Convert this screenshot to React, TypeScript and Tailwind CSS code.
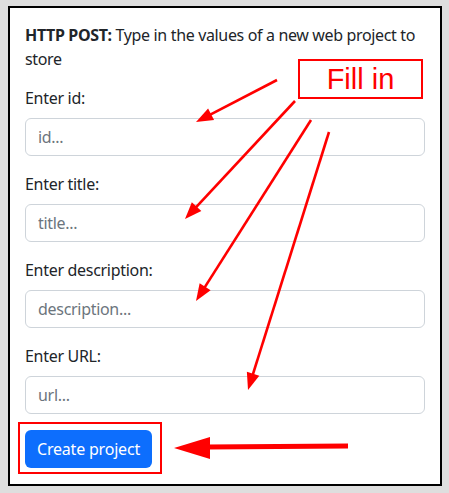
const fields = [
  { label: 'Enter id:', placeholder: 'id...' },
  { label: 'Enter title:', placeholder: 'title...' },
  { label: 'Enter description:', placeholder: 'description...' },
  { label: 'Enter URL:', placeholder: 'url...' },
];

// start/end points of the thin annotation arrows
const arrows = [
  [277, 80, 196, 122],
  [295, 101, 185, 219],
  [311, 120, 196, 301],
  [329, 132, 248, 390],
];

function Arrow({ x1, y1, x2, y2 }: { x1: number; y1: number; x2: number; y2: number }) {
  const dx = x2 - x1;
  const dy = y2 - y1;
  const len = Math.hypot(dx, dy);
  const ux = dx / len;
  const uy = dy / len;
  const head = 17;
  const half = 6.5;
  const bx = x2 - ux * head;
  const by = y2 - uy * head;
  const pts = `${x2},${y2} ${bx - uy * half},${by + ux * half} ${bx + uy * half},${by - ux * half}`;
  return (
    <g>
      <line x1={x1} y1={y1} x2={bx + ux * 2} y2={by + uy * 2} stroke="#ff0000" strokeWidth="2.6" />
      <polygon points={pts} fill="#ff0000" />
    </g>
  );
}

export default function App() {
  return (
    <div className="relative w-[449px] h-[493px] bg-[#dedede] pt-[6px] pl-[8px] font-['Noto_Sans',sans-serif] text-[#212529]">
      <div className="w-[434px] h-[480px] border-2 border-black bg-white px-[15px] pt-[15px]">
        <p className="text-[16px] leading-[24px] mb-[15px] tracking-[-0.35px]">
          <b className="font-bold">HTTP POST:</b> Type in the values of a new web project to store
        </p>
        {fields.map((f) => (
          <div key={f.label} className="mb-[16px]">
            <label className="block text-[16px] leading-[24px] mb-[8px] tracking-[-0.3px]">{f.label}</label>
            <input
              placeholder={f.placeholder}
              className="block w-full h-[38px] rounded-[6px] border border-[#ced4da] px-[12px] text-[16px] outline-none placeholder:text-[#6c757d] tracking-[-0.3px]"
            />
          </div>
        ))}
        <button className="h-[38px] px-[12px] rounded-[6px] bg-[#0d6efd] text-white text-[16px] tracking-[-0.2px]">
          Create project
        </button>
      </div>

      <svg className="absolute left-0 top-0 pointer-events-none" width="449" height="493" viewBox="0 0 449 493">
        <rect x="299" y="60" width="123" height="38" fill="white" stroke="#ff0000" strokeWidth="2" />
        {arrows.map(([x1, y1, x2, y2], i) => (
          <Arrow key={i} x1={x1} y1={y1} x2={x2} y2={y2} />
        ))}
        <rect x="19" y="423" width="142" height="50" fill="none" stroke="#ff0000" strokeWidth="2" />
        <line x1="207" y1="447" x2="348" y2="446" stroke="#ff0000" strokeWidth="5" />
        <polygon points="174,448 210,437 210,459" fill="#ff0000" />
      </svg>
      <div className="absolute left-[299px] top-[60px] w-[123px] h-[38px] flex items-center justify-center text-[29px] text-[#ff0000] font-['Liberation_Sans',Arial,sans-serif] leading-none">
        Fill in
      </div>
    </div>
  );
}
